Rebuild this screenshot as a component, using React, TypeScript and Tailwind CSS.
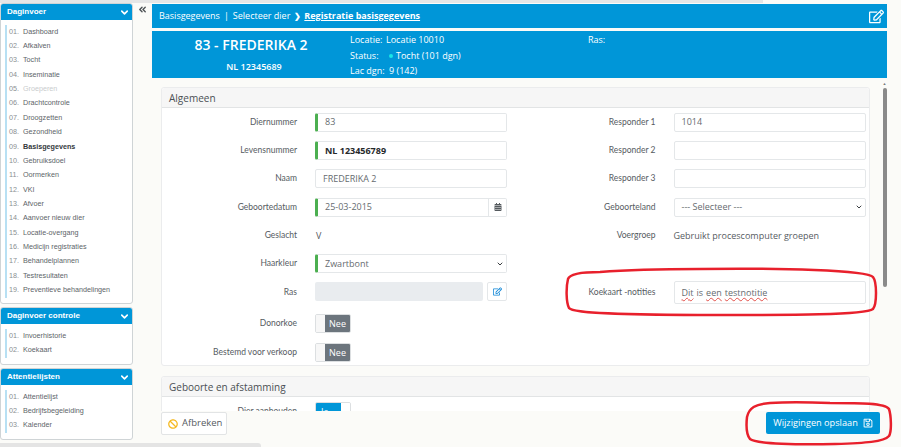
import { ReactNode } from "react";
import { ChevronDown, ChevronsLeft } from "lucide-react";
import { FaBan, FaCalendarAlt, FaRegEdit, FaRegSave } from "react-icons/fa";

const DAGINVOER = [
  "Dashboard", "Afkalven", "Tocht", "Inseminatie", "Groeperen", "Drachtcontrole", "Droogzetten", "Gezondheid",
  "Basisgegevens", "Gebruiksdoel", "Oormerken", "VKI", "Afvoer", "Aanvoer nieuw dier", "Locatie-overgang",
  "Medicijn registraties", "Behandelplannen", "Testresultaten", "Preventieve behandelingen",
];

function MenuCard({ title, items, className }: { title: string; items: string[]; className: string }) {
  return (
    <section className={`rounded-[3px] border border-[#cfd4d6] bg-white overflow-hidden ${className}`}>
      <div className="h-[16px] bg-[#0096d8] flex items-center justify-between pl-[6px] pr-[2px] text-white text-[8px] font-bold">
        <span>{title}</span>
        <ChevronDown size={11} strokeWidth={3.5} />
      </div>
      <ul className="mt-[5px] ml-[4px] border-l-2 border-[#b8e0f3] pl-[2px]">
        {items.map((item, i) => (
          <li key={item} className="h-[14.35px] flex items-center text-[7.2px] whitespace-nowrap text-[#5d6468]">
            <span className="w-[14px] text-[#8a8f92]">{String(i + 1).padStart(2, "0")}.</span>
            <span
              className={
                item === "Basisgegevens"
                  ? "font-bold text-[#33383b]"
                  : item === "Groeperen"
                    ? "text-[#c9cccd]"
                    : ""
              }
            >
              {item}
            </span>
          </li>
        ))}
      </ul>
    </section>
  );
}

function Input({ value, marked, bold, children }: { value?: string; marked?: boolean; bold?: boolean; children?: ReactNode }) {
  return (
    <div
      className={`flex-1 h-[19px] flex items-center rounded-[2px] border border-[#e4e7e9] bg-white text-[9px] pl-[7px] ${
        marked ? "border-l-[3px] border-l-[#4caf50]" : ""
      } ${bold ? "font-bold text-[#26292b]" : "text-[#666b6f]"}`}
    >
      <span className="flex-1">{value}</span>
      {children}
    </div>
  );
}

function Row({ label, tall, children }: { label: string; tall?: boolean; children: ReactNode }) {
  return (
    <div className={`${tall ? "h-[29px]" : "h-[28.3px]"} flex items-center text-[9px] text-[#565b5f]`}>
      <span className="w-[153px] pr-[18px] text-right font-['Lato',sans-serif] text-[8.5px] whitespace-nowrap shrink-0">{label}</span>
      <div className="w-[192px] flex items-center">{children}</div>
    </div>
  );
}

function Toggle({ label, on }: { label: string; on?: boolean }) {
  return (
    <div className="w-[36px] h-[19px] flex rounded-[2px] border border-[#dcdfe1] overflow-hidden text-[9px] text-white">
      {on ? (
        <>
          <span className="w-[25px] bg-[#0096d8] pl-[5px] leading-[17px]">{label}</span>
          <span className="flex-1 bg-white" />
        </>
      ) : (
        <>
          <span className="w-[9px] bg-[#f7f7f7]" />
          <span className="flex-1 bg-[#6c757d] text-center leading-[17px]">{label}</span>
        </>
      )}
    </div>
  );
}

function CardHeader({ title }: { title: string }) {
  return (
    <div className="h-[20px] bg-[#f6f6f6] border-b border-[#e2e4e5] rounded-t-[3px] pl-[7px] text-[10px] leading-[20px] text-[#4a4f53]">
      {title}
    </div>
  );
}

export default function App() {
  return (
    <div className="relative w-[901px] h-[447px] overflow-hidden bg-[#fbfbf8] flex flex-col font-['Open_Sans',sans-serif]">
      <div className="h-[3px] w-[763px] bg-[#e6e6e6] shrink-0" />

      <div className="flex-1 flex min-h-0">
        <aside className="w-[133px] shrink-0 flex flex-col font-['Liberation_Sans',sans-serif]">
          <MenuCard title="Daginvoer" items={DAGINVOER} className="h-[301px]" />
          <MenuCard title="Daginvoer controle" items={["Invoerhistorie", "Koekaart"]} className="h-[58px] mt-[3px]" />
          <MenuCard title="Attentielijsten" items={["Attentielijst", "Bedrijfsbegeleiding", "Kalender"]} className="h-[72px] mt-[3px]" />
        </aside>

        <div className="w-[19px] shrink-0 flex justify-center">
          <ChevronsLeft size={11} strokeWidth={3} className="mt-[1px] text-[#4e5356]" />
        </div>

        <main className="w-[735px] shrink-0 flex flex-col min-h-0">
          <div className="h-[24px] mt-px bg-[#0096d8] flex items-center pl-[7px] pr-[3px] text-white text-[9px] shrink-0">
            <span>Basisgegevens</span>
            <span className="mx-[4px]">|</span>
            <span>Selecteer dier</span>
            <span className="ml-[4px] mr-[3px] font-bold text-[8px]">❯</span>
            <span className="font-bold underline">Registratie basisgegevens</span>
            <FaRegEdit size={15} className="ml-auto" />
          </div>

          <div className="h-[47px] mt-[3px] bg-[#0096d8] flex text-white shrink-0">
            <div className="w-[198px] flex flex-col items-center text-center">
              <span className="mt-[5px] text-[14px] font-semibold leading-[17px]">83 - FREDERIKA 2</span>
              <span className="mt-[8px] ml-[6px] text-[9px] font-semibold leading-[12px]">NL 12345689</span>
            </div>
            <div className="w-[238px] pt-[1px] text-[9px] leading-[15.7px]">
              <div className="flex">
                <span className="w-[36px]">Locatie:</span>
                <span>Locatie 10010</span>
              </div>
              <div className="flex items-center">
                <span className="w-[36px]">Status:</span>
                <span className="w-[4px] h-[4px] rounded-full bg-[#19e6e6] mr-[3px] ml-[3px]" />
                <span>Tocht (101 dgn)</span>
              </div>
              <div className="flex">
                <span className="w-[39px]">Lac dgn:</span>
                <span>9 (142)</span>
              </div>
            </div>
            <div className="pt-[1px] text-[9px] leading-[15.7px]">Ras:</div>
          </div>

          <div className="flex-1 min-h-0 flex">
            <div className="w-[730px] h-[333px] overflow-hidden pl-[9px] pt-[9px]">
              <div className="w-[709px] h-[279px] rounded-[3px] border border-[#ebeced] bg-white">
                <CardHeader title="Algemeen" />
                <div className="flex">
                  <div className="w-[359px]">
                    <Row label="Diernummer"><Input value="83" marked /></Row>
                    <Row label="Levensnummer"><Input value="NL 123456789" marked bold /></Row>
                    <Row label="Naam"><Input value="FREDERIKA 2" /></Row>
                    <Row label="Geboortedatum">
                      <Input value="25-03-2015" marked>
                        <span className="w-[18px] h-full border-l border-[#e4e7e9] flex items-center justify-center">
                          <FaCalendarAlt size={8} className="text-[#555a5e]" />
                        </span>
                      </Input>
                    </Row>
                    <Row label="Geslacht"><span className="pl-px">V</span></Row>
                    <Row label="Haarkleur">
                      <Input value="Zwartbont" marked>
                        <ChevronDown size={8} strokeWidth={3} className="mr-[2px] text-[#3b3f42]" />
                      </Input>
                    </Row>
                    <Row label="Ras">
                      <div className="w-[168px] h-[19px] rounded-[2px] bg-[#e9ecef]" />
                      <span className="ml-[4px] w-[20px] h-[19px] rounded-[2px] border border-[#e4e7e9] flex items-center justify-center">
                        <FaRegEdit size={9} className="text-[#0a84d6]" />
                      </span>
                    </Row>
                    <div className="h-[2.5px]" />
                    <Row label="Donorkoe" tall><Toggle label="Nee" /></Row>
                    <Row label="Bestemd voor verkoop" tall><Toggle label="Nee" /></Row>
                  </div>
                  <div className="w-[349px]">
                    <Row label="Responder 1"><Input value="1014" /></Row>
                    <Row label="Responder 2"><Input /></Row>
                    <Row label="Responder 3"><Input /></Row>
                    <Row label="Geboorteland">
                      <Input value="--- Selecteer ---">
                        <ChevronDown size={8} strokeWidth={3} className="mr-[2px] text-[#3b3f42]" />
                      </Input>
                    </Row>
                    <Row label="Voergroep"><span className="whitespace-nowrap">Gebruikt procescomputer groepen</span></Row>
                    <div className="h-[28.3px]" />
                    <Row label="Koekaart -notities">
                      <div className="flex-1 h-[23px] mt-[2px] flex items-center gap-[3px] rounded-[2px] border border-[#e4e7e9] pl-[7px] text-[9px] text-[#666b6f]">
                        <span className="underline decoration-wavy decoration-[#e2504a] decoration-[0.5px]">Dit</span>
                        <span>is</span>
                        <span className="underline decoration-wavy decoration-[#e2504a] decoration-[0.5px]">een</span>
                        <span className="underline decoration-wavy decoration-[#e2504a] decoration-[0.5px]">testnotitie</span>
                      </div>
                    </Row>
                  </div>
                </div>
              </div>

              <div className="w-[709px] mt-[10px] rounded-t-[3px] border border-[#ebeced] bg-white">
                <CardHeader title="Geboorte en afstamming" />
                <Row label="Dier aanhouden"><Toggle label="Ja" on /></Row>
              </div>
            </div>

            <div className="w-[5px] ml-px mt-[3px] h-[210px] flex flex-col items-center">
              <span className="text-[4px] leading-[5px] text-[#7c7c7c]">▲</span>
              <span className="w-[4px] h-[199px] mt-[2px] rounded-[2px] bg-[#8a8a8a]" />
            </div>
          </div>
        </main>
      </div>

      {/* onderbalk: knoppen liggen over de inhoud */}
      <button className="absolute left-[161px] top-[412px] w-[66px] h-[23px] flex items-center gap-[4px] pl-[6px] rounded-[2px] border border-[#e2e4e5] bg-white text-[9.5px] text-[#565b5f]">
        <FaBan size={10} className="text-[#f5b921]" />
        Afbreken
      </button>
      <button className="absolute left-[766px] top-[412px] w-[114px] h-[22px] flex items-center justify-center gap-[5px] rounded-[2px] bg-[#0096d8] text-[9.2px] text-white">
        Wijzigingen opslaan
        <FaRegSave size={10} />
      </button>

      <div className="absolute left-0 top-[443px] w-[261px] h-[4px] rounded-tr-[3px] bg-[#e4e4e4]" />

      {/* rode markeringen */}
      <svg className="absolute inset-0 pointer-events-none" width={901} height={447} fill="none" stroke="#e8202c" strokeWidth={2.5} strokeLinecap="round">
        <path d="M600 272 C585 272 570 273 568 279 C566 287 566 302 569 308 C573 314 640 315 715 315 C790 315 865 315 873 309 C877 304 877 282 873 277 C867 270 780 268 700 269 C660 269 625 270 600 272Z" />
        <path d="M770 403 C755 404 749 408 747 417 C746 426 746 434 750 439 C756 444 800 445 835 444 C865 443 884 442 889 436 C892 431 891 415 889 409 C885 403 860 403 830 403 C805 402 785 402 770 403Z" />
      </svg>
    </div>
  );
}
